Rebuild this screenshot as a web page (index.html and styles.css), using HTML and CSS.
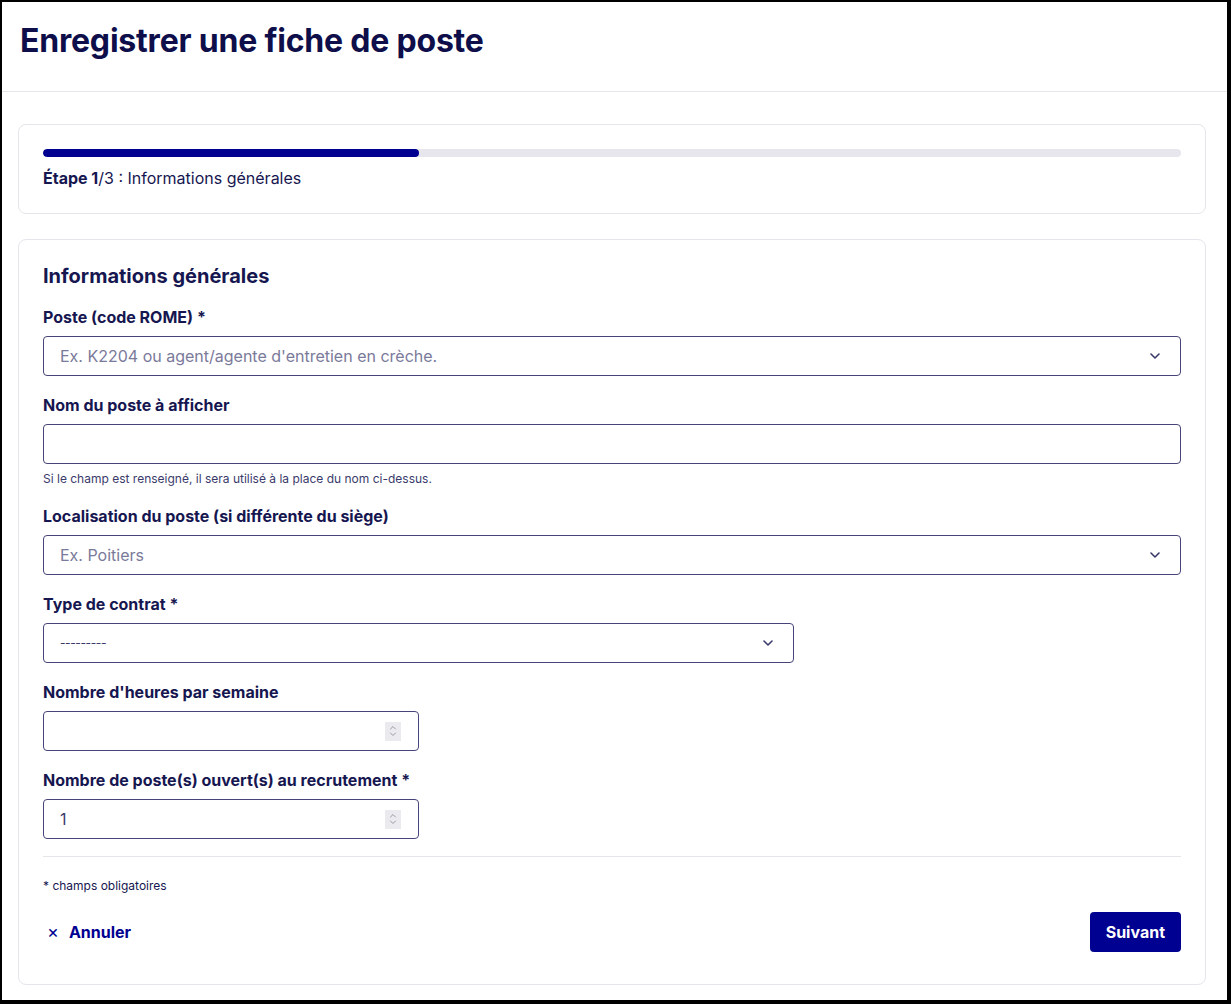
FILE: index.html
```html
<!DOCTYPE html>
<html lang="fr">
<head>
<meta charset="utf-8">
<title>Enregistrer une fiche de poste</title>
<link rel="stylesheet" href="styles.css">
</head>
<body>
<div class="frame">
  <header class="page-header">
    <h1 class="page-title">Enregistrer une fiche de poste</h1>
  </header>
  <main class="content">
    <section class="card card-steps">
      <div class="progress"><div class="progress-fill" style="width:33%"></div></div>
      <p class="step-text"><strong>Étape 1</strong>/3 : Informations générales</p>
    </section>
    <section class="card card-form">
      <h2 class="form-title">Informations générales</h2>

      <div class="group">
        <label class="label">Poste (code ROME) *</label>
        <div class="field">
          <span class="field-text placeholder">Ex. K2204 ou agent/agente d'entretien en crèche.</span>
          <svg class="chevron" width="10" height="6" viewBox="0 0 10 6"><path d="M1 1l4 4 4-4" fill="none" stroke="#3a3a6a" stroke-width="1.6" stroke-linecap="round" stroke-linejoin="round"/></svg>
        </div>
      </div>

      <div class="group">
        <label class="label">Nom du poste à afficher</label>
        <div class="field"><span class="field-text"></span></div>
        <p class="help">Si le champ est renseigné, il sera utilisé à la place du nom ci-dessus.</p>
      </div>

      <div class="group">
        <label class="label">Localisation du poste (si différente du siège)</label>
        <div class="field">
          <span class="field-text placeholder">Ex. Poitiers</span>
          <svg class="chevron" width="10" height="6" viewBox="0 0 10 6"><path d="M1 1l4 4 4-4" fill="none" stroke="#3a3a6a" stroke-width="1.6" stroke-linecap="round" stroke-linejoin="round"/></svg>
        </div>
      </div>

      <div class="group">
        <label class="label">Type de contrat *</label>
        <div class="field field-md">
          <span class="field-text value dashes">---------</span>
          <svg class="chevron" width="10" height="6" viewBox="0 0 10 6"><path d="M1 1l4 4 4-4" fill="none" stroke="#3a3a6a" stroke-width="1.6" stroke-linecap="round" stroke-linejoin="round"/></svg>
        </div>
      </div>

      <div class="group">
        <label class="label">Nombre d'heures par semaine</label>
        <div class="field field-sm">
          <span class="field-text"></span>
          <span class="spinner">
            <svg width="8" height="14" viewBox="0 0 8 14"><path d="M1.5 5l2.5-2.5 2.5 2.5M1.5 9l2.5 2.5 2.5-2.5" fill="none" stroke="#9a9aa8" stroke-width="1" stroke-linecap="round" stroke-linejoin="round"/></svg>
          </span>
        </div>
      </div>

      <div class="group">
        <label class="label">Nombre de poste(s) ouvert(s) au recrutement *</label>
        <div class="field field-sm">
          <span class="field-text value">1</span>
          <span class="spinner">
            <svg width="8" height="14" viewBox="0 0 8 14"><path d="M1.5 5l2.5-2.5 2.5 2.5M1.5 9l2.5 2.5 2.5-2.5" fill="none" stroke="#9a9aa8" stroke-width="1" stroke-linecap="round" stroke-linejoin="round"/></svg>
          </span>
        </div>
      </div>

      <hr class="sep">
      <p class="required-note">* champs obligatoires</p>

      <div class="actions">
        <a class="cancel" href="#"><span class="cancel-x">×</span>Annuler</a>
        <button class="btn-primary" type="button">Suivant</button>
      </div>
    </section>
  </main>
</div>
</body>
</html>
```
FILE: styles.css
```css
* { box-sizing: border-box; }
html, body { margin: 0; padding: 0; background: #000; }
body {
  font-family: Inter, "Noto Sans", sans-serif;
  color: #161650;
}
.frame {
  width: 1231px;
  height: 1004px;
  border-style: solid;
  border-color: #000;
  border-width: 2px 4px 4px 2px;
  background: #fff;
  overflow: hidden;
}
.page-header {
  height: 90px;
  border-bottom: 1px solid #e5e5ea;
  padding: 19px 18px 0;
}
.page-title {
  margin: 0;
  font-size: 32px;
  line-height: 40px;
  font-weight: 700;
  color: #0e0e4a;
  letter-spacing: -0.2px;
}
.content {
  padding: 32px 21px 0 16px;
  display: flex;
  flex-direction: column;
  gap: 25px;
}
.card {
  border: 1px solid #e5e5ea;
  border-radius: 8px;
  background: #fff;
}
.card-steps { padding: 24px 24px 23px; }
.progress {
  height: 8px;
  border-radius: 4px;
  background: #e6e6ec;
  overflow: hidden;
}
.progress-fill {
  height: 100%;
  background: #000091;
  border-radius: 4px;
}
.step-text {
  margin: 9px 0 0;
  font-size: 16px;
  line-height: 24px;
  color: #161650;
}
.step-text strong { font-weight: 700; }

.card-form { padding: 22px 24px 32px; }
.form-title {
  margin: 0 0 15px;
  font-size: 20px;
  line-height: 28px;
  font-weight: 700;
  color: #161650;
}
.group { margin-bottom: 17px; }
.group:last-of-type { margin-bottom: 0; }
.label {
  display: block;
  font-size: 16px;
  line-height: 24px;
  font-weight: 700;
  margin-bottom: 7px;
  color: #161650;
}
.field {
  height: 40px;
  border: 1px solid #45457a;
  border-radius: 4px;
  display: flex;
  align-items: center;
  padding: 0 20px 0 16px;
  background: #fff;
}
.field-md { width: 751px; }
.field-sm { width: 376px; padding-right: 17px; }
.field-text {
  flex: 1;
  font-size: 16px;
  line-height: 24px;
}
.placeholder { color: #7a7a9a; }
.value { color: #3a3a6a; }
.dashes { letter-spacing: -0.4px; font-size: 12px; }
.chevron { flex: none; }
.spinner {
  flex: none;
  width: 16px;
  height: 19px;
  background: #ebebef;
  display: flex;
  align-items: center;
  justify-content: center;
}
.help {
  margin: 7px 0 0;
  font-size: 12px;
  line-height: 16px;
  color: #3a3a6a;
}
.sep {
  border: 0;
  border-top: 1px solid #e5e5ea;
  margin: 16px 0 0;
}
.required-note {
  margin: 21px 0 0;
  font-size: 12px;
  line-height: 16px;
  color: #161650;
}
.actions {
  margin-top: 18px;
  display: flex;
  justify-content: space-between;
  align-items: center;
}
.cancel {
  display: flex;
  align-items: center;
  color: #000091;
  font-weight: 700;
  font-size: 16px;
  line-height: 24px;
  text-decoration: none;
  padding-left: 4px;
}
.cancel-x {
  font-weight: 400;
  font-size: 18px;
  margin-right: 10px;
}
.btn-primary {
  height: 40px;
  padding: 0 16px;
  border: 0;
  border-radius: 4px;
  background: #000091;
  color: #fff;
  font-family: inherit;
  font-size: 16px;
  font-weight: 700;
}
```
